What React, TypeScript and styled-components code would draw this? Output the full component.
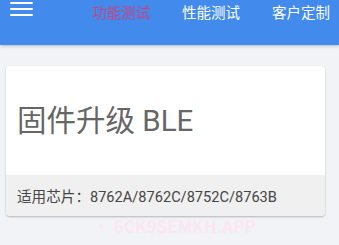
import React from "react";
import styled, { createGlobalStyle } from "styled-components";

const Global = createGlobalStyle`
  html, body { margin: 0; padding: 0; background: #f2f3f7; }
  body { font-family: Roboto, "Noto Sans CJK SC", sans-serif; }
`;

const Page = styled.div`
  width: 339px;
  height: 245px;
  background: #f2f3f7;
  overflow: hidden;
`;

const Header = styled.header`
  height: 45px;
  background: #428bed;
  box-shadow: 0 1px 3px rgba(0, 0, 0, 0.25);
  display: flex;
  align-items: flex-start;
  position: relative;
`;

const Menu = styled.div`
  margin: 2px 0 0 10px;
  width: 23px;
  display: flex;
  flex-direction: column;
  gap: 4px;
  span {
    display: block;
    height: 2px;
    background: #ffffff;
    border-radius: 1px;
  }
`;

const Tabs = styled.nav`
  display: flex;
  gap: 32px;
  margin-left: 59px;
  padding-top: 3px;
`;

const Tab = styled.div<{ $active?: boolean }>`
  font-family: "Noto Sans CJK SC", sans-serif;
  font-size: 14.5px;
  line-height: 18px;
  color: ${(p) => (p.$active ? "#c8437f" : "#ffffff")};
  ${(p) => (p.$active ? "filter: blur(0.4px);" : "")}
`;

const Card = styled.section`
  margin: 21px 14px 0 6px;
  background: #ffffff;
  border-radius: 4px;
  box-shadow: 0 1px 2px rgba(0, 0, 0, 0.25);
  overflow: hidden;
`;

const TitleArea = styled.div`
  height: 109px;
  display: flex;
  align-items: center;
  padding: 1px 0 0 11px;
  box-sizing: border-box;
`;

const Title = styled.h1`
  margin: 0;
  font-family: Roboto, "Noto Sans CJK SC", sans-serif;
  font-weight: 400;
  font-size: 29.5px;
  line-height: 34px;
  color: #666666;
`;

const Footer = styled.div`
  height: 41px;
  background: #f0f0f0;
  display: flex;
  align-items: center;
  padding-left: 11px;
  font-family: Roboto, "Noto Sans CJK SC", sans-serif;
  font-size: 14.6px;
  color: #454545;
`;

const Watermark = styled.div`
  margin: 0 0 0 93px;
  font-family: "Noto Sans CJK SC", sans-serif;
  font-weight: 700;
  font-size: 17px;
  line-height: 20px;
  color: #fbe6f3;
`;

export default function App() {
  return (
    <Page>
      <Global />
      <Header>
        <Menu>
          <span />
          <span />
          <span />
        </Menu>
        <Tabs>
          <Tab $active>功能测试</Tab>
          <Tab>性能测试</Tab>
          <Tab>客户定制</Tab>
        </Tabs>
      </Header>
      <Card>
        <TitleArea>
          <Title>固件升级 BLE</Title>
        </TitleArea>
        <Footer>适用芯片：8762A/8762C/8752C/8763B</Footer>
      </Card>
      <Watermark>• 6CK9SEMKH.APP</Watermark>
    </Page>
  );
}
